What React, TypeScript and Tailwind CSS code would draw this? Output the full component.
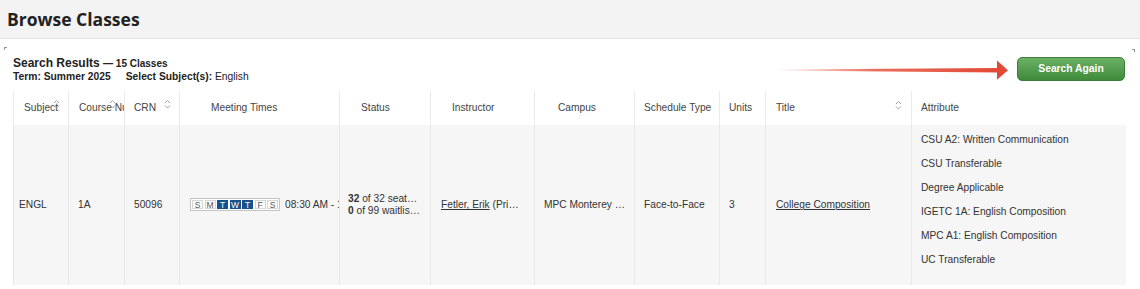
import React from "react";

const SortIcon = () => (
  <svg
    width="7"
    height="10"
    viewBox="0 0 7 10"
    className="absolute right-[8px] top-[8px]"
    fill="none"
    stroke="#a3a3a3"
    strokeWidth="1"
  >
    <path d="M1 4 L3.5 1.5 L6 4" />
    <path d="M1 6.5 L3.5 9 L6 6.5" />
  </svg>
);

const Days = () => {
  const days = [
    { d: "S", on: false },
    { d: "M", on: false },
    { d: "T", on: true },
    { d: "W", on: true },
    { d: "T", on: true },
    { d: "F", on: false },
    { d: "S", on: false },
  ];
  return (
    <div className="flex gap-[1.5px] border border-[#c4c4c4] bg-white p-px">
      {days.map((x, i) => (
        <div
          key={i}
          className={
            x.on
              ? "flex h-[9px] w-[11px] items-center justify-center bg-[#18518c] text-[8.5px] leading-none text-white"
              : "flex h-[9px] w-[11px] items-center justify-center border border-[#d6d6d6] bg-white text-[8.5px] leading-none text-[#555]"
          }
        >
          {x.d}
        </div>
      ))}
    </div>
  );
};

const attrs = [
  "CSU A2: Written Communication",
  "CSU Transferable",
  "Degree Applicable",
  "IGETC 1A: English Composition",
  "MPC A1: English Composition",
  "UC Transferable",
];

export default function App() {
  return (
    <div className="w-[1140px] h-[289px] overflow-hidden bg-white font-['Liberation_Sans',Arial,sans-serif] text-[#333]">
      <div className="h-[39px] border-b border-[#e3e3e3] bg-[#f3f3f3] pl-[7px] pt-[6px]">
        <h1 className="font-['Open_Sans',sans-serif] text-[17.5px] font-bold leading-[26px] text-[#222]">
          Browse Classes
        </h1>
      </div>

      <div className="relative px-[13px] pt-[17px]">
        <div className="absolute left-[4px] top-[8px] h-[3px] w-[3px] border-l border-t border-[#8a95a8]" />
        <div className="absolute right-[5px] top-[10px] h-[3px] w-[3px] border-r border-t border-[#8a95a8]" />

        <div className="relative flex items-start justify-between pr-[2px]">
          <div>
            <div className="text-[12px] font-bold leading-[14px] text-[#222]">
              Search Results <span className="text-[10px]">— 15 Classes</span>
            </div>
            <div className="text-[10.3px] leading-[12px] text-[#222]">
              <span className="font-bold">Term: Summer 2025</span>
              <span className="ml-[15px] font-bold">Select Subject(s):</span>{" "}
              <span>English</span>
            </div>
          </div>

          <svg
            className="absolute left-[762px] top-[4px]"
            width="236"
            height="21"
            viewBox="0 0 236 21"
          >
            <defs>
              <linearGradient id="arrowg" x1="0" y1="0" x2="1" y2="0">
                <stop offset="0" stopColor="#e5533f" stopOpacity="0" />
                <stop offset="0.45" stopColor="#e5533f" stopOpacity="0.85" />
                <stop offset="1" stopColor="#e24a36" stopOpacity="1" />
              </linearGradient>
            </defs>
            <polygon points="0,9.4 223,8 223,12.4 0,10.6" fill="url(#arrowg)" />
            <polygon points="222,0.5 233,10.2 222,19.8" fill="#e24a36" />
          </svg>

          <button className="mt-px flex h-[24px] w-[108px] items-center justify-center rounded-[5px] border border-[#3c7d38] bg-gradient-to-b from-[#6cb166] to-[#3e8a3a] text-[10.3px] font-bold text-white">
            Search Again
          </button>
        </div>

        <table className="mt-[8px] w-[1112px] table-fixed border-collapse text-[10.2px] text-[#333]">
          <colgroup>
            <col className="w-[55px]" />
            <col className="w-[56px]" />
            <col className="w-[55px]" />
            <col className="w-[160px]" />
            <col className="w-[91px]" />
            <col className="w-[104px]" />
            <col className="w-[100px]" />
            <col className="w-[85px]" />
            <col className="w-[46px]" />
            <col className="w-[146px]" />
            <col className="w-[214px]" />
          </colgroup>
          <thead>
            <tr className="h-[34px] text-left font-normal text-[#444]">
              <th className="relative overflow-hidden whitespace-nowrap border-l border-r border-[#ebebeb] pl-[10px] font-normal">
                Subject
                <SortIcon />
              </th>
              <th className="relative overflow-hidden whitespace-nowrap border-r border-[#ebebeb] pl-[10px] font-normal">
                Course Number
                <SortIcon />
              </th>
              <th className="relative overflow-hidden whitespace-nowrap border-r border-[#ebebeb] pl-[9px] font-normal">
                CRN
                <SortIcon />
              </th>
              <th className="whitespace-nowrap border-r border-[#ebebeb] pl-[31px] font-normal">
                Meeting Times
              </th>
              <th className="whitespace-nowrap border-r border-[#ebebeb] pl-[21px] font-normal">
                Status
              </th>
              <th className="whitespace-nowrap border-r border-[#ebebeb] pl-[21px] font-normal">
                Instructor
              </th>
              <th className="whitespace-nowrap border-r border-[#ebebeb] pl-[23px] font-normal">
                Campus
              </th>
              <th className="whitespace-nowrap border-r border-[#ebebeb] pl-[9px] font-normal">
                Schedule Type
              </th>
              <th className="whitespace-nowrap border-r border-[#ebebeb] pl-[9px] font-normal">
                Units
              </th>
              <th className="relative whitespace-nowrap border-r border-[#ebebeb] pl-[10px] font-normal">
                Title
                <span className="absolute right-[9px] top-[9px]">
                  <svg width="7" height="10" viewBox="0 0 7 10" fill="none" stroke="#a3a3a3" strokeWidth="1">
                    <path d="M1 4 L3.5 1.5 L6 4" />
                    <path d="M1 6.5 L3.5 9 L6 6.5" />
                  </svg>
                </span>
              </th>
              <th className="whitespace-nowrap pl-[9px] font-normal">Attribute</th>
            </tr>
          </thead>
          <tbody>
            <tr className="bg-[#f6f6f6]">
              <td className="border-l border-r border-[#e8e8e8] pl-[5px]">ENGL</td>
              <td className="border-r border-[#e8e8e8] pl-[9px]">1A</td>
              <td className="border-r border-[#e8e8e8] pl-[9px]">50096</td>
              <td className="overflow-hidden border-r border-[#e8e8e8] pl-[10px]">
                <div className="flex items-center gap-[5px] whitespace-nowrap">
                  <Days />
                  <span>08:30 AM - 11:50 AM</span>
                </div>
              </td>
              <td className="border-r border-[#e8e8e8] px-[8px] leading-[12px]">
                <div className="truncate">
                  <span className="font-bold">32</span> of 32 seats remain
                </div>
                <div className="truncate">
                  <span className="font-bold">0</span> of 99 waitlist seats remain
                </div>
              </td>
              <td className="border-r border-[#e8e8e8] pl-[10px] pr-[14px]">
                <div className="truncate">
                  <span className="underline">Fetler, Erik</span> (Primary)
                </div>
              </td>
              <td className="border-r border-[#e8e8e8] pl-[9px] pr-[9px]">
                <div className="truncate">MPC Monterey Campus</div>
              </td>
              <td className="border-r border-[#e8e8e8] pl-[9px]">Face-to-Face</td>
              <td className="border-r border-[#e8e8e8] pl-[9px]">3</td>
              <td className="border-r border-[#e8e8e8] pl-[10px]">
                <span className="underline">College Composition</span>
              </td>
              <td className="pl-[9px] pt-[3px] pb-[13px]">
                {attrs.map((a) => (
                  <div key={a} className="leading-[24px]">
                    {a}
                  </div>
                ))}
              </td>
            </tr>
          </tbody>
        </table>
      </div>
    </div>
  );
}
